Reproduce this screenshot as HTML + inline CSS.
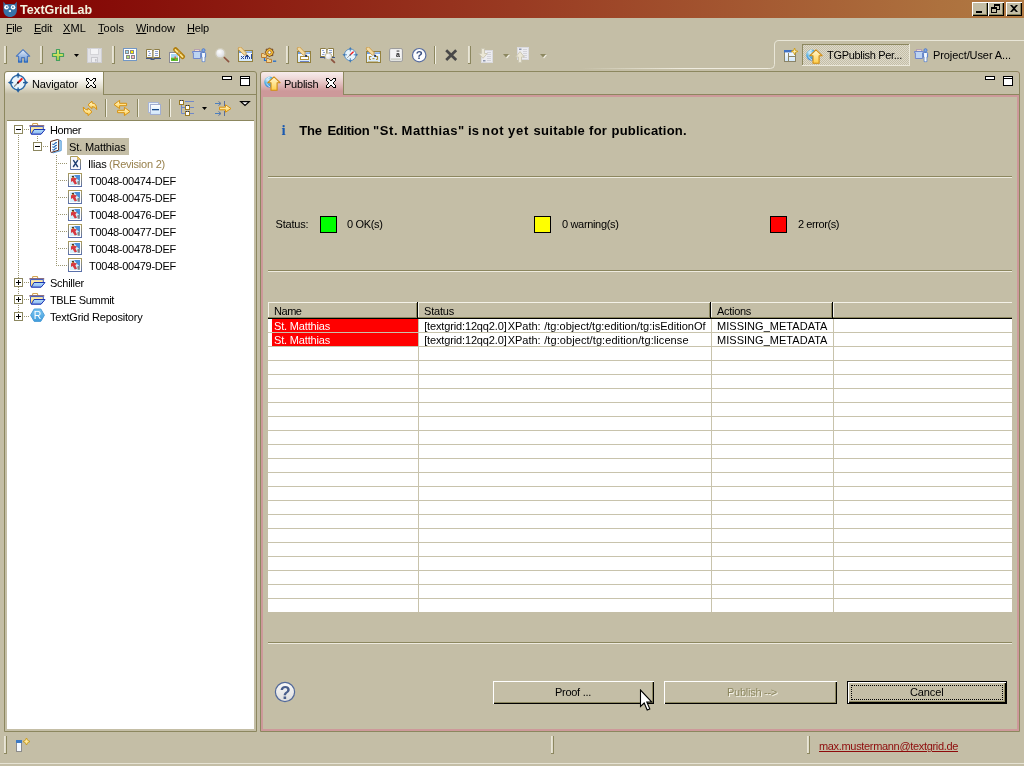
<!DOCTYPE html>
<html><head><meta charset="utf-8"><title>TextGridLab</title><style>
html,body{margin:0;padding:0}
body{width:1024px;height:766px;background:#c4bea6;position:relative;overflow:hidden;font-family:"Liberation Sans",sans-serif;}
div,span.t,svg{position:absolute}
span.t{white-space:pre;}
#root{left:0;top:0;width:1024px;height:766px;will-change:transform;}
u{text-decoration:underline;text-underline-offset:1px}
</style></head><body>
<div id="root">
<div style="left:0px;top:0px;width:1024px;height:18px;background:linear-gradient(90deg,#840000 0px,#860c08 110px,#993a22 512px,#ad713e 940px,#b17a43 1024px);"></div>
<svg style="left:3px;top:1px;" width="15" height="17" viewBox="0 0 15 17">
<path d="M0.4 0.6 L2.6 3.2 Q7.2 2.6 11.6 3.2 L13.8 0.6 L13.9 9 C13.9 13.6 10.6 16 7.1 16 C3.6 16 0.4 13.6 0.4 9 Z" fill="#3773a8"/>
<circle cx="3.4" cy="6.3" r="2.25" fill="#fff"/><circle cx="10.1" cy="6.3" r="2.25" fill="#fff"/>
<circle cx="3.8" cy="6.1" r="0.9" fill="#3470a4"/><circle cx="9.9" cy="6.1" r="0.9" fill="#3470a4"/>
<rect x="5.8" y="9.1" width="2.2" height="1.9" fill="#eef2f7"/>
</svg>
<span class="t" style="left:20px;top:2.92px;font-size:12.5px;font-weight:bold;line-height:15.5px;color:#f3f1de;letter-spacing:-0.064px;">TextGridLab</span>
<div style="left:972px;top:2px;width:16px;height:14px;background:#c4bea6;box-shadow:inset 1px 1px 0 #fff,inset -1px -1px 0 #000,inset -2px -2px 0 #8c875f"></div>
<svg style="left:972px;top:2px;" width="16" height="14" viewBox="0 0 16 14"><rect x="4" y="9" width="6" height="2" fill="#000"/></svg>
<div style="left:988px;top:2px;width:16px;height:14px;background:#c4bea6;box-shadow:inset 1px 1px 0 #fff,inset -1px -1px 0 #000,inset -2px -2px 0 #8c875f"></div>
<svg style="left:988px;top:2px;" width="16" height="14" viewBox="0 0 16 14"><path d="M6 2h6v2h-6z M6 4h1v1h-1z M11 4h1v4h-1z M9 7h3v1h-3z M3 5h6v2h-6z M3 7h1v4h-1z M8 7h1v4h-1z M3 10h6v1h-6z" fill="#000"/></svg>
<div style="left:1006px;top:2px;width:16px;height:14px;background:#c4bea6;box-shadow:inset 1px 1px 0 #fff,inset -1px -1px 0 #000,inset -2px -2px 0 #8c875f"></div>
<svg style="left:1006px;top:2px;" width="16" height="14" viewBox="0 0 16 14"><path d="M4 3h2l2 2 2-2h2l-3 3.5 3 3.5h-2l-2-2-2 2h-2l3-3.5z" fill="#000"/></svg>
<span class="t" style="left:6px;top:21.19px;font-size:11px;font-weight:normal;line-height:14px;color:#000;letter-spacing:-0.438px;"><u>F</u>ile</span>
<span class="t" style="left:34px;top:21.19px;font-size:11px;font-weight:normal;line-height:14px;color:#000;letter-spacing:-0.242px;"><u>E</u>dit</span>
<span class="t" style="left:63px;top:21.19px;font-size:11px;font-weight:normal;line-height:14px;color:#000;letter-spacing:0.125px;"><u>X</u>ML</span>
<span class="t" style="left:98px;top:21.19px;font-size:11px;font-weight:normal;line-height:14px;color:#000;letter-spacing:0.062px;"><u>T</u>ools</span>
<span class="t" style="left:136px;top:21.19px;font-size:11px;font-weight:normal;line-height:14px;color:#000;letter-spacing:-0.023px;"><u>W</u>indow</span>
<span class="t" style="left:187px;top:21.19px;font-size:11px;font-weight:normal;line-height:14px;color:#000;letter-spacing:-0.160px;"><u>H</u>elp</span>
<div style="left:4px;top:46px;width:3px;height:18px;background:#8c875f;"></div>
<div style="left:4px;top:46px;width:2px;height:17px;background:linear-gradient(90deg,#ece9dc,#dcd8c4);"></div>
<div style="left:40px;top:46px;width:3px;height:18px;background:#8c875f;"></div>
<div style="left:40px;top:46px;width:2px;height:17px;background:linear-gradient(90deg,#ece9dc,#dcd8c4);"></div>
<div style="left:112px;top:46px;width:3px;height:18px;background:#8c875f;"></div>
<div style="left:112px;top:46px;width:2px;height:17px;background:linear-gradient(90deg,#ece9dc,#dcd8c4);"></div>
<div style="left:286px;top:46px;width:3px;height:18px;background:#8c875f;"></div>
<div style="left:286px;top:46px;width:2px;height:17px;background:linear-gradient(90deg,#ece9dc,#dcd8c4);"></div>
<div style="left:468px;top:46px;width:3px;height:18px;background:#8c875f;"></div>
<div style="left:468px;top:46px;width:2px;height:17px;background:linear-gradient(90deg,#ece9dc,#dcd8c4);"></div>
<svg style="left:560px;top:38px;" width="464" height="33" viewBox="0 0 464 33"><defs><linearGradient id="pf" x1="0" x2="1" y1="0" y2="0"><stop offset="0" stop-color="#efecdf" stop-opacity="0"/><stop offset="0.55" stop-color="#efecdf" stop-opacity="1"/></linearGradient></defs>
<rect x="20" y="30" width="190" height="1" fill="url(#pf)"/>
<path d="M208 30.5 H210.5 Q214.5 30.5 214.5 26.5 V7 Q214.5 2.5 219 2.5 H464" fill="none" stroke="#e9e6d8" stroke-width="1"/></svg>
<div style="left:802px;top:44px;width:108px;height:22px;background:#c4bea6;box-shadow:inset -1px -1px 0 #ebe8da,inset 1px 1px 0 #8c875f"></div>
<div style="left:803px;top:45px;width:106px;height:20px;background:#c4bea6;background-image:repeating-conic-gradient(#dedacc 0% 25%, #c4bea6 0% 50%);background-size:2px 2px"></div>
<span class="t" style="left:827px;top:48.19px;font-size:11px;font-weight:normal;line-height:14px;color:#000;letter-spacing:-0.318px;">TGPublish Per...</span>
<span class="t" style="left:933px;top:48.19px;font-size:11px;font-weight:normal;line-height:14px;color:#000;letter-spacing:-0.087px;">Project/User A...</span>
<div style="left:4px;top:71px;width:253px;height:661px;background:#c4bea6;border:1px solid #8c875f;box-sizing:border-box;border-radius:3px 3px 0 0"></div>
<div style="left:5px;top:72px;width:98px;height:22px;background:linear-gradient(180deg,#ffffff 0%,#fbfaf6 30%,#e0dccb 70%,#c4bea6 100%);border-radius:3px 0 0 0"></div>
<div style="left:103px;top:72px;width:1px;height:23px;background:#8c875f;"></div>
<div style="left:103px;top:94px;width:153px;height:1px;background:#8c875f;"></div>
<span class="t" style="left:32px;top:77.19px;font-size:11px;font-weight:normal;line-height:14px;color:#000;letter-spacing:-0.120px;">Navigator</span>
<div style="left:7px;top:120px;width:247px;height:1px;background:#8c875f;"></div>
<div style="left:7px;top:121px;width:247px;height:608px;background:#fff;"></div>
<div style="left:18px;top:135px;width:1px;height:182px;background:repeating-linear-gradient(180deg,#9a9570 0 1px,transparent 1px 2px);"></div>
<div style="left:37px;top:136px;width:1px;height:6px;background:repeating-linear-gradient(180deg,#9a9570 0 1px,transparent 1px 2px);"></div>
<div style="left:56px;top:155px;width:1px;height:111px;background:repeating-linear-gradient(180deg,#9a9570 0 1px,transparent 1px 2px);"></div>
<div style="left:24px;top:129px;width:5px;height:1px;background:repeating-linear-gradient(90deg,#9a9570 0 1px,transparent 1px 2px);"></div>
<div style="left:43px;top:146px;width:6px;height:1px;background:repeating-linear-gradient(90deg,#9a9570 0 1px,transparent 1px 2px);"></div>
<div style="left:58px;top:163px;width:9px;height:1px;background:repeating-linear-gradient(90deg,#9a9570 0 1px,transparent 1px 2px);"></div>
<div style="left:58px;top:180px;width:9px;height:1px;background:repeating-linear-gradient(90deg,#9a9570 0 1px,transparent 1px 2px);"></div>
<div style="left:58px;top:197px;width:9px;height:1px;background:repeating-linear-gradient(90deg,#9a9570 0 1px,transparent 1px 2px);"></div>
<div style="left:58px;top:214px;width:9px;height:1px;background:repeating-linear-gradient(90deg,#9a9570 0 1px,transparent 1px 2px);"></div>
<div style="left:58px;top:231px;width:9px;height:1px;background:repeating-linear-gradient(90deg,#9a9570 0 1px,transparent 1px 2px);"></div>
<div style="left:58px;top:248px;width:9px;height:1px;background:repeating-linear-gradient(90deg,#9a9570 0 1px,transparent 1px 2px);"></div>
<div style="left:58px;top:265px;width:9px;height:1px;background:repeating-linear-gradient(90deg,#9a9570 0 1px,transparent 1px 2px);"></div>
<div style="left:24px;top:282px;width:5px;height:1px;background:repeating-linear-gradient(90deg,#9a9570 0 1px,transparent 1px 2px);"></div>
<div style="left:24px;top:299px;width:5px;height:1px;background:repeating-linear-gradient(90deg,#9a9570 0 1px,transparent 1px 2px);"></div>
<div style="left:24px;top:316px;width:5px;height:1px;background:repeating-linear-gradient(90deg,#9a9570 0 1px,transparent 1px 2px);"></div>
<svg style="left:14px;top:125px;" width="9" height="9" viewBox="0 0 9 9"><rect x="0.5" y="0.5" width="8" height="8" fill="#fff" stroke="#8c875f"/><rect x="2" y="4" width="5" height="1" fill="#000"/></svg>
<svg style="left:33px;top:142px;" width="9" height="9" viewBox="0 0 9 9"><rect x="0.5" y="0.5" width="8" height="8" fill="#fff" stroke="#8c875f"/><rect x="2" y="4" width="5" height="1" fill="#000"/></svg>
<svg style="left:14px;top:278px;" width="9" height="9" viewBox="0 0 9 9"><rect x="0.5" y="0.5" width="8" height="8" fill="#fff" stroke="#8c875f"/><rect x="2" y="4" width="5" height="1" fill="#000"/><rect x="4" y="2" width="1" height="5" fill="#000"/></svg>
<svg style="left:14px;top:295px;" width="9" height="9" viewBox="0 0 9 9"><rect x="0.5" y="0.5" width="8" height="8" fill="#fff" stroke="#8c875f"/><rect x="2" y="4" width="5" height="1" fill="#000"/><rect x="4" y="2" width="1" height="5" fill="#000"/></svg>
<svg style="left:14px;top:312px;" width="9" height="9" viewBox="0 0 9 9"><rect x="0.5" y="0.5" width="8" height="8" fill="#fff" stroke="#8c875f"/><rect x="2" y="4" width="5" height="1" fill="#000"/><rect x="4" y="2" width="1" height="5" fill="#000"/></svg>
<div style="left:67px;top:138px;width:62px;height:17px;background:#c4bea6;"></div>
<span class="t" style="left:50px;top:123.19px;font-size:11px;font-weight:normal;line-height:14px;color:#000;letter-spacing:-0.403px;">Homer</span>
<span class="t" style="left:69px;top:140.19px;font-size:11px;font-weight:normal;line-height:14px;color:#000;letter-spacing:-0.132px;">St. Matthias</span>
<span class="t" style="left:88px;top:157.19px;font-size:11px;font-weight:normal;line-height:14px;color:#000;letter-spacing:-0.212px;">Ilias</span>
<span class="t" style="left:109px;top:157.19px;font-size:11px;font-weight:normal;line-height:14px;color:#98804c;letter-spacing:-0.224px;">(Revision 2)</span>
<span class="t" style="left:89px;top:174.19px;font-size:11px;font-weight:normal;line-height:14px;color:#000;letter-spacing:-0.274px;">T0048-00474-DEF</span>
<span class="t" style="left:89px;top:191.19px;font-size:11px;font-weight:normal;line-height:14px;color:#000;letter-spacing:-0.274px;">T0048-00475-DEF</span>
<span class="t" style="left:89px;top:208.19px;font-size:11px;font-weight:normal;line-height:14px;color:#000;letter-spacing:-0.274px;">T0048-00476-DEF</span>
<span class="t" style="left:89px;top:225.19px;font-size:11px;font-weight:normal;line-height:14px;color:#000;letter-spacing:-0.274px;">T0048-00477-DEF</span>
<span class="t" style="left:89px;top:242.19px;font-size:11px;font-weight:normal;line-height:14px;color:#000;letter-spacing:-0.274px;">T0048-00478-DEF</span>
<span class="t" style="left:89px;top:259.19px;font-size:11px;font-weight:normal;line-height:14px;color:#000;letter-spacing:-0.274px;">T0048-00479-DEF</span>
<span class="t" style="left:50px;top:276.19px;font-size:11px;font-weight:normal;line-height:14px;color:#000;letter-spacing:-0.260px;">Schiller</span>
<span class="t" style="left:50px;top:293.19px;font-size:11px;font-weight:normal;line-height:14px;color:#000;letter-spacing:-0.351px;">TBLE Summit</span>
<span class="t" style="left:50px;top:310.19px;font-size:11px;font-weight:normal;line-height:14px;color:#000;letter-spacing:-0.215px;">TextGrid Repository</span>
<div style="left:260px;top:71px;width:760px;height:661px;background:#cd999a;border:1px solid #8c875f;box-sizing:border-box;border-radius:3px 3px 0 0"></div>
<div style="left:261px;top:72px;width:758px;height:22px;background:#c4bea6;border-radius:3px 3px 0 0"></div>
<div style="left:343px;top:94px;width:676px;height:1px;background:#8c875f;"></div>
<div style="left:261px;top:72px;width:82px;height:25px;background:linear-gradient(180deg,#f7ecec 0px,#efdada 6px,#dcb3b3 14px,#cd999a 19px);border-radius:3px 0 0 0"></div>
<div style="left:343px;top:72px;width:1px;height:23px;background:#8c875f;"></div>
<span class="t" style="left:284px;top:77.19px;font-size:11px;font-weight:normal;line-height:14px;color:#000;letter-spacing:-0.225px;">Publish</span>
<div style="left:263px;top:97px;width:754px;height:632px;background:#c4bea6;"></div>
<div style="left:268px;top:176px;width:744px;height:1px;background:#8c875f;"></div>
<div style="left:268px;top:177px;width:744px;height:1px;background:#eeebdf;"></div>
<div style="left:268px;top:270px;width:744px;height:1px;background:#8c875f;"></div>
<div style="left:268px;top:271px;width:744px;height:1px;background:#eeebdf;"></div>
<div style="left:268px;top:642px;width:744px;height:1px;background:#8c875f;"></div>
<div style="left:268px;top:643px;width:744px;height:1px;background:#eeebdf;"></div>
<span class="t" style="left:281.5px;top:120.80px;font-size:15px;font-weight:bold;line-height:18px;color:#1b5ab0;letter-spacing:0.000px;font-family:'Liberation Serif',serif;">i</span>
<span class="t" style="left:299.2px;top:122.50px;font-size:13px;font-weight:bold;line-height:16px;color:#000;letter-spacing:-0.108px;">The</span>
<span class="t" style="left:327.4px;top:122.50px;font-size:13px;font-weight:bold;line-height:16px;color:#000;letter-spacing:-0.307px;">Edition</span>
<span class="t" style="left:372.9px;top:122.50px;font-size:13px;font-weight:bold;line-height:16px;color:#000;letter-spacing:0.630px;">&quot;St.</span>
<span class="t" style="left:401.6px;top:122.50px;font-size:13px;font-weight:bold;line-height:16px;color:#000;letter-spacing:0.455px;">Matthias&quot;</span>
<span class="t" style="left:468.1px;top:122.50px;font-size:13px;font-weight:bold;line-height:16px;color:#000;letter-spacing:0.128px;">is</span>
<span class="t" style="left:482.1px;top:122.50px;font-size:13px;font-weight:bold;line-height:16px;color:#000;letter-spacing:0.594px;">not</span>
<span class="t" style="left:507.9px;top:122.50px;font-size:13px;font-weight:bold;line-height:16px;color:#000;letter-spacing:0.834px;">yet</span>
<span class="t" style="left:533.6px;top:122.50px;font-size:13px;font-weight:bold;line-height:16px;color:#000;letter-spacing:0.297px;">suitable</span>
<span class="t" style="left:589.1px;top:122.50px;font-size:13px;font-weight:bold;line-height:16px;color:#000;letter-spacing:0.252px;">for</span>
<span class="t" style="left:611.6px;top:122.50px;font-size:13px;font-weight:bold;line-height:16px;color:#000;letter-spacing:0.179px;">publication.</span>
<span class="t" style="left:275.5px;top:217.19px;font-size:11px;font-weight:normal;line-height:14px;color:#000;letter-spacing:-0.179px;">Status:</span>
<div style="left:320px;top:216px;width:17px;height:17px;background:#00ff00;border:1px solid #000;box-sizing:border-box"></div>
<span class="t" style="left:347px;top:217.19px;font-size:11px;font-weight:normal;line-height:14px;color:#000;letter-spacing:-0.344px;">0 OK(s)</span>
<div style="left:534px;top:216px;width:17px;height:17px;background:#ffff00;border:1px solid #000;box-sizing:border-box"></div>
<span class="t" style="left:562px;top:217.19px;font-size:11px;font-weight:normal;line-height:14px;color:#000;letter-spacing:-0.336px;">0 warning(s)</span>
<div style="left:770px;top:216px;width:17px;height:17px;background:#ff0000;border:1px solid #000;box-sizing:border-box"></div>
<span class="t" style="left:798px;top:217.19px;font-size:11px;font-weight:normal;line-height:14px;color:#000;letter-spacing:-0.423px;">2 error(s)</span>
<div style="left:268px;top:302px;width:744px;height:17px;background:#c4bea6;"></div>
<div style="left:268px;top:319px;width:744px;height:293px;background:#fff;background-image:repeating-linear-gradient(180deg,transparent 0 13px,#c8c3ac 13px 14px)"></div>
<div style="left:268px;top:302px;width:744px;height:1px;background:#f4f2e8;"></div>
<div style="left:268px;top:317px;width:744px;height:1px;background:#8c875f;"></div>
<div style="left:268px;top:318px;width:744px;height:1px;background:#000;"></div>
<div style="left:268px;top:302px;width:1px;height:15px;background:#f4f2e8;"></div>
<div style="left:418px;top:302px;width:1px;height:15px;background:#f4f2e8;"></div>
<div style="left:711px;top:302px;width:1px;height:15px;background:#f4f2e8;"></div>
<div style="left:833px;top:302px;width:1px;height:15px;background:#f4f2e8;"></div>
<div style="left:416px;top:303px;width:1px;height:15px;background:#8c875f;"></div>
<div style="left:417px;top:302px;width:1px;height:17px;background:#000;"></div>
<div style="left:418px;top:319px;width:1px;height:293px;background:#c8c3ac;"></div>
<div style="left:709px;top:303px;width:1px;height:15px;background:#8c875f;"></div>
<div style="left:710px;top:302px;width:1px;height:17px;background:#000;"></div>
<div style="left:711px;top:319px;width:1px;height:293px;background:#c8c3ac;"></div>
<div style="left:831px;top:303px;width:1px;height:15px;background:#8c875f;"></div>
<div style="left:832px;top:302px;width:1px;height:17px;background:#000;"></div>
<div style="left:833px;top:319px;width:1px;height:293px;background:#c8c3ac;"></div>
<span class="t" style="left:274px;top:304.19px;font-size:11px;font-weight:normal;line-height:14px;color:#000;letter-spacing:-0.461px;">Name</span>
<span class="t" style="left:424px;top:304.19px;font-size:11px;font-weight:normal;line-height:14px;color:#000;letter-spacing:-0.198px;">Status</span>
<span class="t" style="left:717px;top:304.19px;font-size:11px;font-weight:normal;line-height:14px;color:#000;letter-spacing:-0.297px;">Actions</span>
<div style="left:272px;top:319px;width:146px;height:13px;background:#ff0000;"></div>
<div style="left:272px;top:333px;width:146px;height:13px;background:#ff0000;"></div>
<span class="t" style="left:274px;top:319.19px;font-size:11px;font-weight:normal;line-height:14px;color:#fff;letter-spacing:-0.173px;">St. Matthias</span>
<span class="t" style="left:717px;top:319.19px;font-size:11px;font-weight:normal;line-height:14px;color:#000;letter-spacing:0.030px;">MISSING_METADATA</span>
<span class="t" style="left:274px;top:333.19px;font-size:11px;font-weight:normal;line-height:14px;color:#fff;letter-spacing:-0.173px;">St. Matthias</span>
<span class="t" style="left:717px;top:333.19px;font-size:11px;font-weight:normal;line-height:14px;color:#000;letter-spacing:0.030px;">MISSING_METADATA</span>
<span class="t" style="left:424.2px;top:319.19px;font-size:11px;font-weight:normal;line-height:14px;color:#000;letter-spacing:-0.145px;">[textgrid:12qq2.0]</span>
<span class="t" style="left:507.7px;top:319.19px;font-size:11px;font-weight:normal;line-height:14px;color:#000;letter-spacing:-0.022px;">XPath:</span>
<span class="t" style="left:544.2px;top:319.19px;font-size:11px;font-weight:normal;line-height:14px;color:#000;letter-spacing:0.016px;">/tg:object/tg:edition/tg:isEditionOf</span>
<span class="t" style="left:424.2px;top:333.19px;font-size:11px;font-weight:normal;line-height:14px;color:#000;letter-spacing:-0.145px;">[textgrid:12qq2.0]</span>
<span class="t" style="left:507.7px;top:333.19px;font-size:11px;font-weight:normal;line-height:14px;color:#000;letter-spacing:-0.022px;">XPath:</span>
<span class="t" style="left:544.2px;top:333.19px;font-size:11px;font-weight:normal;line-height:14px;color:#000;letter-spacing:0.079px;">/tg:object/tg:edition/tg:license</span>
<div style="left:493px;top:681px;width:161px;height:23px;background:#c4bea6;box-shadow:inset 1px 1px 0 #fff,inset -1px -1px 0 #000,inset -2px -2px 0 #8c875f"></div>
<span class="t" style="left:555px;top:685.19px;font-size:11px;font-weight:normal;line-height:14px;color:#000;letter-spacing:-0.281px;">Proof ...</span>
<div style="left:664px;top:681px;width:173px;height:23px;background:#c4bea6;box-shadow:inset 1px 1px 0 #fff,inset -1px -1px 0 #000,inset -2px -2px 0 #8c875f"></div>
<span class="t" style="left:727px;top:685.19px;font-size:11px;font-weight:normal;line-height:14px;color:#8c875f;letter-spacing:-0.263px;text-shadow:1px 1px 0 #f4f2e8;">Publish --&gt;</span>
<div style="left:847px;top:681px;width:160px;height:23px;background:#c4bea6;box-shadow:inset 0 0 0 1px #000,inset 2px 2px 0 #fff,inset -2px -2px 0 #000,inset -3px -3px 0 #8c875f"></div>
<span class="t" style="left:910px;top:685.19px;font-size:11px;font-weight:normal;line-height:14px;color:#000;letter-spacing:-0.125px;">Cancel</span>
<div style="left:851px;top:685px;width:152px;height:15px;background:transparent;border:1px dotted #000;box-sizing:border-box"></div>
<svg style="left:274px;top:681px;" width="22" height="22" viewBox="0 0 22 22"><defs><linearGradient id="hg" x1="0" y1="0" x2="0" y2="1"><stop offset="0" stop-color="#fbfbfb"/><stop offset="1" stop-color="#dcdcdc"/></linearGradient></defs>
<circle cx="11" cy="11" r="9.6" fill="url(#hg)" stroke="#52699a" stroke-width="1.2"/>
<text x="11.2" y="17.6" font-family="Liberation Sans" font-weight="bold" font-size="18" text-anchor="middle" fill="#4a5f8c">?</text></svg>
<svg style="left:639px;top:689px;" width="14" height="23" viewBox="0 0 14 23"><path d="M1.5 1 V17.5 L5.2 14 L8.2 21 L10.8 19.9 L7.8 13 H12.8 Z" fill="#fff" stroke="#000" stroke-width="1.1" stroke-linejoin="miter"/></svg>
<div style="left:4px;top:736px;width:3px;height:18px;background:#8c875f;"></div>
<div style="left:4px;top:736px;width:2px;height:17px;background:linear-gradient(90deg,#ece9dc,#dcd8c4);"></div>
<div style="left:551px;top:736px;width:3px;height:18px;background:#8c875f;"></div>
<div style="left:551px;top:736px;width:2px;height:17px;background:linear-gradient(90deg,#ece9dc,#dcd8c4);"></div>
<div style="left:807px;top:736px;width:3px;height:18px;background:#8c875f;"></div>
<div style="left:807px;top:736px;width:2px;height:17px;background:linear-gradient(90deg,#ece9dc,#dcd8c4);"></div>
<span class="t" style="left:819px;top:739.19px;font-size:11px;font-weight:normal;line-height:14px;color:#8e0b0b;letter-spacing:-0.328px;text-decoration:underline;text-underline-offset:1px;">max.mustermann@textgrid.de</span>
<div style="left:0px;top:763px;width:1024px;height:1px;background:#e6e3d4;"></div>
<svg style="left:16px;top:738px;" width="16" height="16" viewBox="0 0 16 16"><rect x="0.5" y="2.5" width="5" height="11" fill="#f4f9ff" stroke="#8c8c8c"/><rect x="0" y="2" width="6" height="3" fill="#3d7ac5"/><path d="M10.5 0l1.2 2.3 2.3 1.2-2.3 1.2-1.2 2.3-1.2-2.3-2.3-1.2 2.3-1.2z" fill="#ffe9a0" stroke="#c8960a" stroke-width="0.8"/></svg>
<svg width="0" height="0" style="left:0;top:0"><defs><linearGradient id="gy" x1="0" y1="0" x2="0" y2="1"><stop offset="0" stop-color="#fff8d8"/><stop offset="1" stop-color="#ffcf4a"/></linearGradient><linearGradient id="gb" x1="0" y1="0" x2="0" y2="1"><stop offset="0" stop-color="#ffffff"/><stop offset="1" stop-color="#cfe6fa"/></linearGradient><linearGradient id="gh" x1="0" y1="0" x2="0" y2="1"><stop offset="0" stop-color="#e9f0fb"/><stop offset="1" stop-color="#5f8fd0"/></linearGradient><linearGradient id="gp" x1="0" y1="0" x2="0" y2="1"><stop offset="0" stop-color="#eaf078"/><stop offset="1" stop-color="#a8cc44"/></linearGradient><linearGradient id="gfr" x1="0" y1="0" x2="0" y2="1"><stop offset="0" stop-color="#ab9c5c"/><stop offset="1" stop-color="#5a70aa"/></linearGradient><radialGradient id="ggl" cx="0.35" cy="0.3" r="0.8"><stop offset="0" stop-color="#dff2fb"/><stop offset="0.45" stop-color="#58b2e4"/><stop offset="1" stop-color="#2f6fd0"/></radialGradient><radialGradient id="glens" cx="0.4" cy="0.35" r="0.7"><stop offset="0" stop-color="#ffffff"/><stop offset="1" stop-color="#d4d6dc"/></radialGradient><linearGradient id="gfo" x1="0" y1="0" x2="0" y2="1"><stop offset="0" stop-color="#fff2b8"/><stop offset="1" stop-color="#ffd262"/></linearGradient><linearGradient id="gfl" x1="0" y1="0" x2="0" y2="1"><stop offset="0" stop-color="#b2e0fd"/><stop offset="1" stop-color="#8db4ee"/></linearGradient><linearGradient id="ghex" x1="0" y1="0" x2="0" y2="1"><stop offset="0" stop-color="#7cc6f2"/><stop offset="1" stop-color="#3f9cdc"/></linearGradient></defs></svg>
<svg style="left:15px;top:47px;" width="16" height="16" viewBox="0 0 16 16"><path d="M8 2.6 L1.3 9.2 H3.6 V15 H6.6 V10.6 H9.4 V15 H12.4 V9.2 H14.7 Z" fill="url(#gh)" stroke="#4a77be" stroke-width="1.1" stroke-linejoin="round"/><path d="M3.6 13.2V15H6.6V13.2 M9.4 13.2V15H12.4V13.2" stroke="#2a6abf" fill="none" stroke-width="1.1"/></svg>
<svg style="left:51px;top:47px;" width="16" height="16" viewBox="0 0 16 16"><path d="M5.5 2.5h3v4h4v3h-4v4h-3v-4h-4v-3h4z" fill="url(#gp)" stroke="#43a05e" stroke-width="1.2" stroke-linejoin="round"/></svg>
<svg style="left:74px;top:54px;" width="5" height="3" viewBox="0 0 5 3"><path d="M0 0h5L2.5 3z" fill="#000"/></svg>
<svg style="left:86px;top:47px;" width="17" height="17" viewBox="0 0 17 17"><rect x="1.5" y="1.5" width="14" height="14" fill="#e3e3e7" stroke="#cfcfd4"/><rect x="4.5" y="1.5" width="8" height="6" fill="#f3f3f5" stroke="#d4d4d8"/><rect x="5.5" y="10.5" width="6" height="5" fill="#ededf0" stroke="#c9c9ce"/><rect x="9" y="12" width="1.5" height="2.5" fill="#c4c4ca"/></svg>
<svg style="left:123px;top:48px;" width="14" height="13" viewBox="0 0 14 13"><rect x="0.5" y="0.5" width="13" height="12" fill="#fff" stroke="#7197c6"/><rect x="2.5" y="2.5" width="3" height="3" fill="#9edcf4" stroke="#8a8a8a"/><rect x="7.5" y="2.5" width="3" height="3" fill="#fff000" stroke="#8a8a8a"/><rect x="3.5" y="7.5" width="3" height="3" fill="#b2e070" stroke="#8a8a8a"/><rect x="8.5" y="7.5" width="3" height="3" fill="#ffb4c4" stroke="#8a8a8a"/></svg>
<svg style="left:146px;top:48px;" width="15" height="13" viewBox="0 0 15 13"><path d="M0 2 H14 V10 H15 V11 H9 L8 12 H5 L4 11 H0Z" fill="#3f5484"/><path d="M0.5 1.5 H5.5 L7 2.6 V10.4 L5.8 9.5 H0.5Z" fill="#fbfcff" stroke="#8d7d44" stroke-width="1" /><path d="M7 2.6 L8.4 1.5 H13.5 V9.5 H8.2 L7 10.4Z" fill="#fbfcff" stroke="#8d7d44" stroke-width="1"/><path d="M2 3.5h2 M3 5.5h2 M2 7.5h2.5 M9 3.5h3 M9 5.5h3 M9 7.5h3" stroke="#8fa3cf" stroke-width="1"/></svg>
<svg style="left:169px;top:47px;" width="17" height="16" viewBox="0 0 17 16"><rect x="0.5" y="5.5" width="10" height="10" fill="#fff" stroke="#8a8a96"/><rect x="2" y="7" width="7" height="3.6" fill="#a6d6f6"/><rect x="2" y="10.6" width="7" height="3.4" fill="#62bc30"/><rect x="5.6" y="9.4" width="1.1" height="2.4" fill="#e03838"/><rect x="3.6" y="12" width="2" height="1" fill="#2e8c2a"/><path d="M6.6 2.6L13.6 9.6" stroke="#b07c0a" stroke-width="4.8" stroke-linecap="round"/><path d="M6.4 2.8L8.6 5 M11.4 7.6L13.6 9.8" stroke="#fbe48c" stroke-width="1.8" stroke-linecap="round"/><path d="M9.2 3.4L12.6 6.8 M7.6 5.2L10.8 8.4" stroke="#e2ac28" stroke-width="1" stroke-dasharray="0.9 0.7"/><circle cx="10.1" cy="6.1" r="0.95" fill="#cfc9b0"/></svg>
<svg style="left:192px;top:48px;" width="16" height="15" viewBox="0 0 16 15"><rect x="2.5" y="1.5" width="5" height="2" fill="#f3dcd0" stroke="#b5a0b0" stroke-width="1"/><path d="M0.5 3.5H9.5V4.8H8.6V10.5H1.4V4.8H0.5Z" fill="#bdd4f2" stroke="#6f86cc" stroke-width="1"/><circle cx="11.5" cy="2.2" r="1.55" fill="#7fa8e6" stroke="#4674c8" stroke-width="0.8"/><path d="M9.4 5.4 Q9.4 4.5 10.3 4.5 H12.7 Q13.6 4.5 13.6 5.4 V9 H12.8 V13.6 H10.2 V9 H9.4Z" fill="#e6eefa" stroke="#4674c8" stroke-width="0.9"/><rect x="10.6" y="5" width="1.8" height="8.4" fill="#f4f8fd"/></svg>
<svg style="left:214px;top:47px;" width="17" height="17" viewBox="0 0 17 17"><path d="M9.8 10 L14.6 14.6" stroke="#8d5440" stroke-width="1.7" stroke-linecap="round"/><circle cx="6.3" cy="6.3" r="4.7" fill="url(#glens)" stroke="#cfcbb8" stroke-width="1.4"/></svg>
<svg style="left:237px;top:47px;" width="17" height="17" viewBox="0 0 17 17"><g transform="translate(0,0)"><rect x="1.5" y="3.5" width="14" height="11" fill="url(#gb)" stroke="#94813e" stroke-width="1"/><rect x="2" y="4" width="13" height="2" fill="#6c9ce2"/><rect x="8" y="4.4" width="6.5" height="0.9" fill="#cfe0f8"/></g><g transform="translate(0.6,0) scale(1.12)"><path d="M1 0.3 L2.8 0 L8 5.4 L6 7.3 L0.4 1.9Z" fill="#f2d9a0" stroke="#c99a4a" stroke-width="0.8"/><path d="M6 7.3 L8 5.4 L8.8 8.2Z" fill="#c9b28a"/><circle cx="8.5" cy="8" r="1" fill="#1d3260"/></g></svg>
<svg style="left:241px;top:54px;shape-rendering:crispEdges;" width="11" height="5" viewBox="0 0 11 5"><path d="M10 0h1v1h-1zM10 1h1v1h-1zM0 2h1v1h-1zM2 2h1v1h-1zM4 2h4v1h-4zM10 2h1v1h-1zM1 3h1v1h-1zM4 3h1v1h-1zM6 3h1v1h-1zM8 3h1v1h-1zM10 3h1v1h-1zM0 4h1v1h-1zM2 4h1v1h-1zM4 4h1v1h-1zM6 4h1v1h-1zM8 4h1v1h-1zM10 4h1v1h-1z" fill="#2a4a9c"/></svg>
<svg style="left:260px;top:47px;" width="17" height="16" viewBox="0 0 17 16"><g transform="translate(9.5,5.4)"><path d="M0 -4.6L1.3 -3.2L3.2 -3.3L3.2 -1.3L4.6 0L3.2 1.3L3.3 3.2L1.3 3.2L0 4.6L-1.3 3.2L-3.2 3.3L-3.2 1.3L-4.6 0L-3.2 -1.3L-3.3 -3.2L-1.3 -3.2Z" fill="#f6bf34" stroke="#6a3814" stroke-width="0.9"/><circle r="1.6" fill="#fff" stroke="#8a5a2a" stroke-width="0.8"/></g><path d="M1.5 6.5H3.5L4.2 7.3H6.5V10.5H1.5Z" fill="#f6d48a" stroke="#b97c34"/><path d="M6.5 11.5H8.5L9.2 12.3H11.5V15.5H6.5Z" fill="#f6d48a" stroke="#b97c34"/><path d="M4.5 11V13.5H6.5" fill="none" stroke="#2a6fc8" stroke-width="1.2"/><rect x="13" y="13.5" width="3.2" height="1.4" fill="#2a6fc8"/></svg>
<svg style="left:296px;top:47px;" width="17" height="17" viewBox="0 0 17 17"><g transform="translate(0,1)"><rect x="1.5" y="3.5" width="13" height="11" fill="url(#gb)" stroke="#94813e" stroke-width="1"/><rect x="2" y="4" width="12" height="2" fill="#6c9ce2"/><rect x="8" y="4.4" width="5.5" height="0.9" fill="#cfe0f8"/><rect x="4.5" y="8.5" width="8" height="3" fill="#fff" stroke="#b0923c"/><rect x="4" y="13" width="9" height="1" fill="#6c7fc0"/></g><g transform="translate(0.6,0) scale(1.12)"><path d="M1 0.3 L2.8 0 L8 5.4 L6 7.3 L0.4 1.9Z" fill="#f2d9a0" stroke="#c99a4a" stroke-width="0.8"/><path d="M6 7.3 L8 5.4 L8.8 8.2Z" fill="#c9b28a"/><circle cx="8.5" cy="8" r="1" fill="#1d3260"/></g></svg>
<svg style="left:320px;top:47px;" width="15" height="13" viewBox="0 0 15 13"><path d="M0 2 H14 V10 H15 V11 H9 L8 12 H5 L4 11 H0Z" fill="#3f5484"/><path d="M0.5 1.5 H5.5 L7 2.6 V10.4 L5.8 9.5 H0.5Z" fill="#fbfcff" stroke="#8d7d44" stroke-width="1" /><path d="M7 2.6 L8.4 1.5 H13.5 V9.5 H8.2 L7 10.4Z" fill="#fbfcff" stroke="#8d7d44" stroke-width="1"/><path d="M2 3.5h2 M3 5.5h2 M2 7.5h2.5 M9 3.5h3 M9 5.5h3 M9 7.5h3" stroke="#8fa3cf" stroke-width="1"/></svg>
<svg style="left:324px;top:52px;" width="12" height="12" viewBox="0 0 12 12"><path d="M6.3 6.3 L10.4 10.4" stroke="#8d5440" stroke-width="1.8" stroke-linecap="round"/><circle cx="4.4" cy="4.4" r="3.4" fill="url(#glens)" stroke="#c8c09c" stroke-width="1"/></svg>
<svg style="left:341px;top:45px;" width="19" height="19" viewBox="0 0 19 19"><circle cx="9.30" cy="9.80" r="5.8" fill="#e8f4fc" stroke="#4f88c0" stroke-width="0.9"/><path d="M9.30 1.90L10.70 4.30L7.90 4.30Z" fill="#3d78b4"/><path d="M9.30 4.00L9.30 6.40" stroke="#3d78b4" stroke-width="0.9"/><path d="M9.30 17.70L7.90 15.30L10.70 15.30Z" fill="#3d78b4"/><path d="M9.30 15.60L9.30 13.20" stroke="#3d78b4" stroke-width="0.9"/><path d="M17.20 9.80L14.80 11.20L14.80 8.40Z" fill="#3d78b4"/><path d="M15.10 9.80L12.70 9.80" stroke="#3d78b4" stroke-width="0.9"/><path d="M1.40 9.80L3.80 8.40L3.80 11.20Z" fill="#3d78b4"/><path d="M3.50 9.80L5.90 9.80" stroke="#3d78b4" stroke-width="0.9"/><path d="M10.03 9.07L12.20 6.90" stroke="#f41a1a" stroke-width="1.35" stroke-linecap="round"/><path d="M9.30 9.80L6.40 12.70" stroke="#8e8e8e" stroke-width="0.81" stroke-linecap="round"/><circle cx="9.20" cy="9.90" r="0.72" fill="#2a1020"/></svg>
<svg style="left:365px;top:47px;" width="17" height="17" viewBox="0 0 17 17"><g transform="translate(0,1)"><rect x="1.5" y="3.5" width="14" height="11" fill="url(#gb)" stroke="#94813e" stroke-width="1"/><rect x="2" y="4" width="13" height="2" fill="#6c9ce2"/><rect x="8" y="4.4" width="6.5" height="0.9" fill="#cfe0f8"/><path d="M4.5 11.5V8.5H6.5 M10.5 8.5H12.5V11.5 M4.5 11.5H6 M11 11.5H12.5" fill="none" stroke="#b0923c" stroke-width="1.2"/><rect x="7.5" y="10" width="2" height="1.2" fill="#b0923c"/><path d="M3.5 13.5h9" stroke="#b0923c" stroke-width="1.2" stroke-dasharray="1 1"/></g><g transform="translate(0.6,0) scale(1.12)"><path d="M1 0.3 L2.8 0 L8 5.4 L6 7.3 L0.4 1.9Z" fill="#f2d9a0" stroke="#c99a4a" stroke-width="0.8"/><path d="M6 7.3 L8 5.4 L8.8 8.2Z" fill="#c9b28a"/><circle cx="8.5" cy="8" r="1" fill="#1d3260"/></g></svg>
<svg style="left:389px;top:48px;" width="14" height="14" viewBox="0 0 14 14"><rect x="0.5" y="0.5" width="13" height="13" rx="1.6" fill="#e6e6e6" stroke="#9c9c9c"/><rect x="1.8" y="1.6" width="10.4" height="8.6" fill="#f4f4f4"/><rect x="1.8" y="10.4" width="10.4" height="1.8" fill="#d2d4cc"/><text x="9" y="8.6" font-family="Liberation Sans" font-weight="bold" font-size="7" text-anchor="middle" fill="#222">a</text><rect x="7.6" y="2.6" width="2.8" height="0.9" fill="#222"/></svg>
<svg style="left:411px;top:47px;" width="17" height="17" viewBox="0 0 17 17"><circle cx="8.2" cy="8.2" r="6.7" fill="#fcfdff" stroke="#576c9f" stroke-width="1.2"/><text x="8.3" y="12.4" font-family="Liberation Sans" font-weight="bold" font-size="11.5" text-anchor="middle" fill="#3b5082">?</text></svg>
<div style="left:434px;top:46px;width:1px;height:18px;background:#8c875f;"></div>
<div style="left:435px;top:46px;width:1px;height:18px;background:#f0eee2;"></div>
<svg style="left:444px;top:48px;" width="15" height="14" viewBox="0 0 15 14"><path d="M2.2 2.2L12.2 12 M12.2 2.2L2.2 12" stroke="#484848" stroke-width="2.7"/></svg>
<svg style="left:478px;top:47px;" width="16" height="17" viewBox="0 0 16 17"><rect x="3.5" y="3.5" width="11" height="12" fill="#ececf0" stroke="#dadade"/><rect x="9" y="5" width="4" height="1" fill="#d2d2d8"/><rect x="9" y="7" width="4" height="1" fill="#d2d2d8"/><rect x="9" y="9" width="4" height="1" fill="#d2d2d8"/><rect x="9" y="11" width="4" height="1" fill="#d2d2d8"/><rect x="9" y="13" width="4" height="1" fill="#d2d2d8"/><rect x="5" y="13" width="2.5" height="1.5" fill="#8f97ad"/><path d="M3.5 1.5H6.5V6.5H9.3L5 11.3L0.7 6.5H3.5Z" fill="#ebe7d6" stroke="#c9c5b2" stroke-width="0.9"/></svg>
<svg style="left:515px;top:46px;" width="16" height="18" viewBox="0 0 16 18"><rect x="2.5" y="1.5" width="11" height="12" fill="#ececf0" stroke="#dadade"/><rect x="8" y="3" width="4" height="1" fill="#d2d2d8"/><rect x="8" y="5" width="4" height="1" fill="#d2d2d8"/><rect x="8" y="7" width="4" height="1" fill="#d2d2d8"/><rect x="8" y="9" width="4" height="1" fill="#d2d2d8"/><rect x="8" y="11" width="4" height="1" fill="#d2d2d8"/><rect x="4" y="2.5" width="2.5" height="1.5" fill="#8f97ad"/><path d="M3.5 16.5H6.5V11H9.3L5 5.6L0.7 11H3.5Z" fill="#ebe7d6" stroke="#c9c5b2" stroke-width="0.9"/></svg>
<svg style="left:503px;top:54px;" width="7" height="5" viewBox="0 0 7 5"><path d="M1 1h6L4 4.5z" fill="#f0eee2"/><path d="M0 0h6L3 3.5z" fill="#8c875f"/></svg>
<svg style="left:540px;top:54px;" width="7" height="5" viewBox="0 0 7 5"><path d="M1 1h6L4 4.5z" fill="#f0eee2"/><path d="M0 0h6L3 3.5z" fill="#8c875f"/></svg>
<svg style="left:783px;top:47px;" width="16" height="16" viewBox="0 0 16 16"><rect x="1.5" y="3.5" width="11" height="11" fill="url(#gb)" stroke="#8a8468"/><rect x="1" y="3" width="8" height="2.4" fill="#3f72c6"/><path d="M5.5 6V14 M5.5 9.5H12" stroke="#8a8468" stroke-width="1" fill="none"/><path d="M11.6 1.0000000000000004L12.5 3.5000000000000004L15.0 4.4L12.5 5.300000000000001L11.6 7.800000000000001L10.7 5.300000000000001L8.2 4.4L10.7 3.5000000000000004Z" fill="#fff2b4" stroke="#cf9c14" stroke-width="0.9"/></svg>
<svg style="left:806px;top:48px;" width="17" height="16" viewBox="0 0 17 16"><circle cx="5.7" cy="7.1" r="5.5" fill="url(#ggl)"/><path d="M2.2 4.6q1.6-2.4 3.8-2.6 M2.6 8.6q1 2.6 3.6 3.2" stroke="#e8f8ff" stroke-width="0.9" fill="none" opacity="0.85"/><path d="M10 1.8L16.1 7.7H13.1V15.2H7V7.7H3.9Z" fill="url(#gy)" stroke="#d08c12" stroke-width="1.1" stroke-linejoin="round"/></svg>
<svg style="left:914px;top:48px;" width="16" height="15" viewBox="0 0 16 15"><rect x="2.5" y="1.5" width="5" height="2" fill="#f3dcd0" stroke="#b5a0b0" stroke-width="1"/><path d="M0.5 3.5H9.5V4.8H8.6V10.5H1.4V4.8H0.5Z" fill="#bdd4f2" stroke="#6f86cc" stroke-width="1"/><circle cx="11.5" cy="2.2" r="1.55" fill="#7fa8e6" stroke="#4674c8" stroke-width="0.8"/><path d="M9.4 5.4 Q9.4 4.5 10.3 4.5 H12.7 Q13.6 4.5 13.6 5.4 V9 H12.8 V13.6 H10.2 V9 H9.4Z" fill="#e6eefa" stroke="#4674c8" stroke-width="0.9"/><rect x="10.6" y="5" width="1.8" height="8.4" fill="#f4f8fd"/></svg>
<svg style="left:6px;top:71px;" width="24" height="24" viewBox="0 0 24 24"><circle cx="12.10" cy="11.60" r="7.3" fill="#e8f4fc" stroke="#2d6aa8" stroke-width="1.35"/><path d="M12.10 1.40L14.20 4.60L10.00 4.60Z" fill="#245f9e"/><path d="M12.10 4.30L12.10 6.70" stroke="#245f9e" stroke-width="1.35"/><path d="M12.10 21.80L10.00 18.60L14.20 18.60Z" fill="#245f9e"/><path d="M12.10 18.90L12.10 16.50" stroke="#245f9e" stroke-width="1.35"/><path d="M22.30 11.60L19.10 13.70L19.10 9.50Z" fill="#245f9e"/><path d="M19.40 11.60L17.00 11.60" stroke="#245f9e" stroke-width="1.35"/><path d="M1.90 11.60L5.10 9.50L5.10 13.70Z" fill="#245f9e"/><path d="M4.80 11.60L7.20 11.60" stroke="#245f9e" stroke-width="1.35"/><path d="M13.01 10.69L15.75 7.95" stroke="#f41a1a" stroke-width="2.03" stroke-linecap="round"/><path d="M12.10 11.60L8.45 15.25" stroke="#8e8e8e" stroke-width="1.22" stroke-linecap="round"/><circle cx="12.00" cy="11.70" r="1.08" fill="#2a1020"/></svg>
<svg style="left:264px;top:75px;" width="17" height="16" viewBox="0 0 17 16"><circle cx="5.7" cy="7.1" r="5.5" fill="url(#ggl)"/><path d="M2.2 4.6q1.6-2.4 3.8-2.6 M2.6 8.6q1 2.6 3.6 3.2" stroke="#e8f8ff" stroke-width="0.9" fill="none" opacity="0.85"/><path d="M10 1.8L16.1 7.7H13.1V15.2H7V7.7H3.9Z" fill="url(#gy)" stroke="#d08c12" stroke-width="1.1" stroke-linejoin="round"/></svg>
<svg style="left:86px;top:78px;shape-rendering:crispEdges;" width="10" height="10" viewBox="0 0 10 10"><path d="M0 0h3v1h-3zM7 0h3v1h-3zM0 1h1v1h-1zM3 1h1v1h-1zM6 1h1v1h-1zM9 1h1v1h-1zM0 2h1v1h-1zM4 2h2v1h-2zM9 2h1v1h-1zM1 3h1v1h-1zM8 3h1v1h-1zM2 4h1v1h-1zM7 4h1v1h-1zM2 5h1v1h-1zM7 5h1v1h-1zM1 6h1v1h-1zM8 6h1v1h-1zM0 7h1v1h-1zM4 7h2v1h-2zM9 7h1v1h-1zM0 8h1v1h-1zM3 8h1v1h-1zM6 8h1v1h-1zM9 8h1v1h-1zM0 9h3v1h-3zM7 9h3v1h-3z" fill="#000"/><path d="M1 1h2v1h-2zM7 1h2v1h-2zM1 2h3v1h-3zM6 2h3v1h-3zM2 3h6v1h-6zM3 4h4v1h-4zM3 5h4v1h-4zM2 6h6v1h-6zM1 7h3v1h-3zM6 7h3v1h-3zM1 8h2v1h-2zM7 8h2v1h-2z" fill="#fbfaf5"/></svg>
<svg style="left:326px;top:78px;shape-rendering:crispEdges;" width="10" height="10" viewBox="0 0 10 10"><path d="M0 0h3v1h-3zM7 0h3v1h-3zM0 1h1v1h-1zM3 1h1v1h-1zM6 1h1v1h-1zM9 1h1v1h-1zM0 2h1v1h-1zM4 2h2v1h-2zM9 2h1v1h-1zM1 3h1v1h-1zM8 3h1v1h-1zM2 4h1v1h-1zM7 4h1v1h-1zM2 5h1v1h-1zM7 5h1v1h-1zM1 6h1v1h-1zM8 6h1v1h-1zM0 7h1v1h-1zM4 7h2v1h-2zM9 7h1v1h-1zM0 8h1v1h-1zM3 8h1v1h-1zM6 8h1v1h-1zM9 8h1v1h-1zM0 9h3v1h-3zM7 9h3v1h-3z" fill="#000"/><path d="M1 1h2v1h-2zM7 1h2v1h-2zM1 2h3v1h-3zM6 2h3v1h-3zM2 3h6v1h-6zM3 4h4v1h-4zM3 5h4v1h-4zM2 6h6v1h-6zM1 7h3v1h-3zM6 7h3v1h-3zM1 8h2v1h-2zM7 8h2v1h-2z" fill="#fff"/></svg>
<svg style="left:222px;top:76px;" width="28" height="10" viewBox="0 0 28 10"><rect x="0.5" y="0.5" width="9" height="3" fill="#fff" stroke="#000"/><rect x="18.5" y="0.5" width="9" height="9" fill="#fff" stroke="#000"/><rect x="18" y="2" width="10" height="1" fill="#000"/></svg>
<svg style="left:985px;top:76px;" width="28" height="10" viewBox="0 0 28 10"><rect x="0.5" y="0.5" width="9" height="3" fill="#fff" stroke="#000"/><rect x="18.5" y="0.5" width="9" height="9" fill="#fff" stroke="#000"/><rect x="18" y="2" width="10" height="1" fill="#000"/></svg>
<div style="left:105px;top:99px;width:1px;height:18px;background:#8c875f;"></div>
<div style="left:106px;top:99px;width:1px;height:18px;background:#f0eee2;"></div>
<div style="left:137px;top:99px;width:1px;height:18px;background:#8c875f;"></div>
<div style="left:138px;top:99px;width:1px;height:18px;background:#f0eee2;"></div>
<div style="left:169px;top:99px;width:1px;height:18px;background:#8c875f;"></div>
<div style="left:170px;top:99px;width:1px;height:18px;background:#f0eee2;"></div>
<svg style="left:82px;top:100px;" width="16" height="17" viewBox="0 0 16 17"><g fill="url(#gy)" stroke="#d8920e" stroke-width="1" stroke-linejoin="round"><path d="M6 4.9L10 1.1V3Q14.9 3.2 14.7 9.6Q13 6.4 10 6.6V8.6Z"/><path d="M10 11.8L6 15.6V13.7Q1.1 13.4 1.3 7Q3 10.2 6 10V8Z"/></g></svg>
<svg style="left:113px;top:99px;" width="18" height="18" viewBox="0 0 18 18"><g fill="url(#gy)" stroke="#d8920e" stroke-width="1" stroke-linejoin="round"><path d="M1 5.5L6.6 1.4V4.3H13.6V6.7H6.6V9.6Z"/><path d="M17 12.5L11.4 8.4V11.3H4.6V13.7H11.4V16.6Z"/></g></svg>
<svg style="left:148px;top:102px;" width="13" height="13" viewBox="0 0 13 13"><rect x="0.5" y="0.5" width="10" height="10" fill="#eaf4fc" stroke="#a9b6d6"/><rect x="2.5" y="2.5" width="10" height="10" fill="url(#gb)" stroke="#a2aed0"/><rect x="4" y="7" width="7" height="1.3" fill="#174a8c"/></svg>
<svg style="left:179px;top:100px;" width="16" height="16" viewBox="0 0 16 16"><path d="M6 1.5H15 M2.5 5V13.5H6 M2.5 7.5H6 M11 7.5H15 M11 13.5H15" stroke="#7189c9" fill="none"/><rect x="0.5" y="0.5" width="4" height="4" fill="#fff" stroke="#9a7a22"/><rect x="1" y="0" width="1" height="1" fill="#1c2f6c"/><rect x="3" y="0" width="1" height="1" fill="#1c2f6c"/><rect x="6.5" y="5.5" width="4" height="4" fill="#fff" stroke="#9a7a22"/><rect x="7" y="5" width="1" height="1" fill="#1c2f6c"/><rect x="9" y="5" width="1" height="1" fill="#1c2f6c"/><rect x="6.5" y="11.5" width="4" height="4" fill="#fff" stroke="#9a7a22"/><rect x="7" y="11" width="1" height="1" fill="#1c2f6c"/><rect x="9" y="11" width="1" height="1" fill="#1c2f6c"/></svg>
<svg style="left:202px;top:107px;" width="5" height="3" viewBox="0 0 5 3"><path d="M0 0h5L2.5 3z" fill="#000"/></svg>
<svg style="left:214px;top:100px;" width="18" height="17" viewBox="0 0 18 17"><g stroke="#4a7fc0" fill="none"><path d="M1 3.5H6"/><path d="M1 13.5H6"/></g><g stroke="#5a6f9c" fill="none"><path d="M4.5 1.5L7 3.5L4.5 5.5 M10.5 1V6"/><path d="M4.5 11.5L7 13.5L4.5 15.5 M10.5 11V16"/></g><path d="M5.5 7.2H11.5V4.8L17 8.5L11.5 12.2V9.8H5.5Z" fill="url(#gy)" stroke="#d8920e" stroke-width="1" stroke-linejoin="round"/></svg>
<svg style="left:239px;top:100px;" width="12" height="7" viewBox="0 0 12 7"><path d="M1.7 1.6H10.3L6 5.5Z" fill="#fff" stroke="#000" stroke-width="1.2"/></svg>
<svg style="left:29px;top:122px;" width="17" height="13" viewBox="0 0 17 13"><path d="M3.6 4V2.3Q3.6 1.5 4.4 1.5H7.8Q8.6 1.5 8.6 2.3V4" fill="#fffdf4" stroke="#d6a552" stroke-width="1.1"/><rect x="0.4" y="3" width="14.8" height="1.7" fill="#8c6e7e"/><path d="M1.5 4.6V11.2L2.6 12H12L14.3 9V4.6Z" fill="url(#gfo)" stroke="#3a55c4" stroke-width="1"/><path d="M5 7.5H16L12.2 12.1H2.3Z" fill="url(#gfl)" stroke="#1c34b2" stroke-width="1" stroke-linejoin="round"/></svg>
<svg style="left:29px;top:275px;" width="17" height="13" viewBox="0 0 17 13"><path d="M3.6 4V2.3Q3.6 1.5 4.4 1.5H7.8Q8.6 1.5 8.6 2.3V4" fill="#fffdf4" stroke="#d6a552" stroke-width="1.1"/><rect x="0.4" y="3" width="14.8" height="1.7" fill="#8c6e7e"/><path d="M1.5 4.6V11.2L2.6 12H12L14.3 9V4.6Z" fill="url(#gfo)" stroke="#3a55c4" stroke-width="1"/><path d="M5 7.5H16L12.2 12.1H2.3Z" fill="url(#gfl)" stroke="#1c34b2" stroke-width="1" stroke-linejoin="round"/></svg>
<svg style="left:29px;top:292px;" width="17" height="13" viewBox="0 0 17 13"><path d="M3.6 4V2.3Q3.6 1.5 4.4 1.5H7.8Q8.6 1.5 8.6 2.3V4" fill="#fffdf4" stroke="#d6a552" stroke-width="1.1"/><rect x="0.4" y="3" width="14.8" height="1.7" fill="#8c6e7e"/><path d="M1.5 4.6V11.2L2.6 12H12L14.3 9V4.6Z" fill="url(#gfo)" stroke="#3a55c4" stroke-width="1"/><path d="M5 7.5H16L12.2 12.1H2.3Z" fill="url(#gfl)" stroke="#1c34b2" stroke-width="1" stroke-linejoin="round"/></svg>
<svg style="left:49px;top:138px;" width="14" height="16" viewBox="0 0 14 16"><path d="M9.4 1.8L12.2 2.8V12.6L4.4 14.8L2.4 14.2" fill="#a9d4f4" stroke="#4d94d4" stroke-width="0.9"/><path d="M1.5 3.6L8.4 1.5Q9.6 1.2 9.6 2.4V12.2L2.7 14.3Q1.5 14.6 1.5 13.4Z" fill="#fff" stroke="#5e2e22" stroke-width="1"/><path d="M3.4 5.9Q4.6 7.2 5.6 5.8T7.9 4.6 M3.4 8.7Q4.6 10 5.6 8.6T7.9 7.4 M3.4 11.5Q4.6 12.8 5.6 11.4T7.9 10.2" stroke="#2466b8" stroke-width="1.1" fill="none"/></svg>
<svg style="left:70px;top:156px;" width="11" height="14" viewBox="0 0 11 14"><path d="M0.5 0.5H7.5L10.5 3.5V13.5H0.5Z" fill="#f6f6fd" stroke="url(#gfr)"/><path d="M7.5 0.5V3.5H10.5Z" fill="#f0c860" stroke="#caa040" stroke-width="0.6"/><path d="M3.3 4.2Q5.6 7.5 7.8 11 M7.8 4.2Q5.5 7.5 3.2 11" stroke="#1f3e72" stroke-width="1.45" fill="none"/></svg>
<svg style="left:68px;top:173px;" width="14" height="14" viewBox="0 0 14 14"><rect x="0.5" y="0.5" width="13" height="13" fill="#fff" stroke="url(#gfr)"/><rect x="2" y="2" width="10" height="10" fill="#d6f0fb"/><path d="M6 2H12V8.4L9.4 6.2Z" fill="#4a8ed8"/><path d="M3 5.4L5.2 4L7 5L9.2 5.6L7.4 7.2L9 10.8L6.8 11.6L4.6 8L3 9Z" fill="#d63840"/><path d="M3.6 3.4L5.2 2.6L6.2 3.8L4.8 5Z" fill="#3a2a24"/><path d="M4.2 4.4l1.2.6" stroke="#e8a020" stroke-width="1"/><path d="M9.2 8.4L11.8 7.4V11.8H9.8Z" fill="#7c858c"/></svg>
<svg style="left:68px;top:190px;" width="14" height="14" viewBox="0 0 14 14"><rect x="0.5" y="0.5" width="13" height="13" fill="#fff" stroke="url(#gfr)"/><rect x="2" y="2" width="10" height="10" fill="#d6f0fb"/><path d="M6 2H12V8.4L9.4 6.2Z" fill="#4a8ed8"/><path d="M3 5.4L5.2 4L7 5L9.2 5.6L7.4 7.2L9 10.8L6.8 11.6L4.6 8L3 9Z" fill="#d63840"/><path d="M3.6 3.4L5.2 2.6L6.2 3.8L4.8 5Z" fill="#3a2a24"/><path d="M4.2 4.4l1.2.6" stroke="#e8a020" stroke-width="1"/><path d="M9.2 8.4L11.8 7.4V11.8H9.8Z" fill="#7c858c"/></svg>
<svg style="left:68px;top:207px;" width="14" height="14" viewBox="0 0 14 14"><rect x="0.5" y="0.5" width="13" height="13" fill="#fff" stroke="url(#gfr)"/><rect x="2" y="2" width="10" height="10" fill="#d6f0fb"/><path d="M6 2H12V8.4L9.4 6.2Z" fill="#4a8ed8"/><path d="M3 5.4L5.2 4L7 5L9.2 5.6L7.4 7.2L9 10.8L6.8 11.6L4.6 8L3 9Z" fill="#d63840"/><path d="M3.6 3.4L5.2 2.6L6.2 3.8L4.8 5Z" fill="#3a2a24"/><path d="M4.2 4.4l1.2.6" stroke="#e8a020" stroke-width="1"/><path d="M9.2 8.4L11.8 7.4V11.8H9.8Z" fill="#7c858c"/></svg>
<svg style="left:68px;top:224px;" width="14" height="14" viewBox="0 0 14 14"><rect x="0.5" y="0.5" width="13" height="13" fill="#fff" stroke="url(#gfr)"/><rect x="2" y="2" width="10" height="10" fill="#d6f0fb"/><path d="M6 2H12V8.4L9.4 6.2Z" fill="#4a8ed8"/><path d="M3 5.4L5.2 4L7 5L9.2 5.6L7.4 7.2L9 10.8L6.8 11.6L4.6 8L3 9Z" fill="#d63840"/><path d="M3.6 3.4L5.2 2.6L6.2 3.8L4.8 5Z" fill="#3a2a24"/><path d="M4.2 4.4l1.2.6" stroke="#e8a020" stroke-width="1"/><path d="M9.2 8.4L11.8 7.4V11.8H9.8Z" fill="#7c858c"/></svg>
<svg style="left:68px;top:241px;" width="14" height="14" viewBox="0 0 14 14"><rect x="0.5" y="0.5" width="13" height="13" fill="#fff" stroke="url(#gfr)"/><rect x="2" y="2" width="10" height="10" fill="#d6f0fb"/><path d="M6 2H12V8.4L9.4 6.2Z" fill="#4a8ed8"/><path d="M3 5.4L5.2 4L7 5L9.2 5.6L7.4 7.2L9 10.8L6.8 11.6L4.6 8L3 9Z" fill="#d63840"/><path d="M3.6 3.4L5.2 2.6L6.2 3.8L4.8 5Z" fill="#3a2a24"/><path d="M4.2 4.4l1.2.6" stroke="#e8a020" stroke-width="1"/><path d="M9.2 8.4L11.8 7.4V11.8H9.8Z" fill="#7c858c"/></svg>
<svg style="left:68px;top:258px;" width="14" height="14" viewBox="0 0 14 14"><rect x="0.5" y="0.5" width="13" height="13" fill="#fff" stroke="url(#gfr)"/><rect x="2" y="2" width="10" height="10" fill="#d6f0fb"/><path d="M6 2H12V8.4L9.4 6.2Z" fill="#4a8ed8"/><path d="M3 5.4L5.2 4L7 5L9.2 5.6L7.4 7.2L9 10.8L6.8 11.6L4.6 8L3 9Z" fill="#d63840"/><path d="M3.6 3.4L5.2 2.6L6.2 3.8L4.8 5Z" fill="#3a2a24"/><path d="M4.2 4.4l1.2.6" stroke="#e8a020" stroke-width="1"/><path d="M9.2 8.4L11.8 7.4V11.8H9.8Z" fill="#7c858c"/></svg>
<svg style="left:30px;top:308px;" width="15" height="15" viewBox="0 0 15 15"><path d="M4.2 1H10.8L14.4 7.2L10.8 13.4H4.2L0.6 7.2Z" fill="url(#ghex)" stroke="#4f9fd8" stroke-width="1"/><text x="7.6" y="11" font-family="Liberation Sans" font-size="10.5" text-anchor="middle" fill="#fff">R</text></svg>
</div>
</body></html>
